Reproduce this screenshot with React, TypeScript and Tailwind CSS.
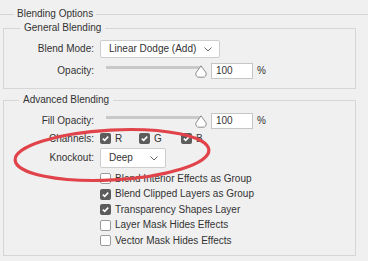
import React from 'react';

const Chevron = () => (
  <svg width="8" height="5" viewBox="0 0 8 5" className="shrink-0">
    <path d="M0.5 0.5 L4 4 L7.5 0.5" fill="none" stroke="#6b6b6b" strokeWidth="1" />
  </svg>
);

const Select = ({ value, width, height }: { value: string; width: string; height: string }) => (
  <div className={`flex items-center justify-between bg-white border border-[#cdcdcd] rounded-[2px] pl-[8px] pr-[7px] ${width} ${height}`}>
    <span>{value}</span>
    <Chevron />
  </div>
);

const Checkbox = ({ checked }: { checked?: boolean }) =>
  checked ? (
    <div className="w-[11px] h-[11px] rounded-[2px] bg-[#5c5c5c] flex items-center justify-center shrink-0">
      <svg width="9" height="9" viewBox="0 0 9 9">
        <path d="M1.8 4.6 L3.7 6.4 L7.2 2.6" fill="none" stroke="#fff" strokeWidth="1.6" />
      </svg>
    </div>
  ) : (
    <div className="w-[11px] h-[11px] rounded-[2px] bg-white border border-[#9a9a9a] shrink-0" />
  );

const Slider = () => (
  <div className="relative w-[107px] h-[16px]">
    <div className="ml-[6px] mt-[3px] w-[94px] h-[3px] bg-[#c9c9c9]" />
    <svg width="12" height="13" viewBox="0 0 12 13" className="absolute left-[95px] top-[2px]">
      <path d="M6 0.8 L11.2 8 Q11.4 12.2 8 12.2 L4 12.2 Q0.6 12.2 0.8 8 Z" fill="#fff" stroke="#8c8c8c" strokeWidth="1" />
    </svg>
  </div>
);

const SliderRow = ({ label }: { label: string }) => (
  <div className="flex items-center h-[16px]">
    <div className="w-[90px] text-right">{label}</div>
    <div className="ml-[6px] flex items-center">
      <Slider />
      <div className="ml-[4px] w-[42px] h-[16px] bg-white border border-[#c6c6c6] pl-[4px] leading-[14px]">100</div>
      <span className="ml-[4px]">%</span>
    </div>
  </div>
);

const CheckRow = ({ label, checked }: { label: string; checked?: boolean }) => (
  <div className="flex items-center h-[15.5px] ml-[96px]">
    <Checkbox checked={checked} />
    <span className="ml-[4px]">{label}</span>
  </div>
);

export default function App() {
  return (
    <div className="relative w-[368px] h-[261px] overflow-hidden bg-[#f0f0f0] text-[10px] leading-[12px] text-[#333333] font-['Liberation_Sans',Arial,sans-serif]">
      <fieldset className="-ml-px mt-[8px] w-[400px] border border-[#d6d6d6] pl-[3px] pb-[20px]">
        <legend className="ml-[11px] px-[3px] leading-[12px]">Blending Options</legend>

        <fieldset className="mt-[2px] w-[353px] border border-[#d6d6d6] pb-[9px]">
          <legend className="ml-[16px] px-[4px] leading-[12px]">General Blending</legend>
          <div className="mt-[6px] flex items-center">
            <div className="w-[90px] text-right">Blend Mode:</div>
            <div className="ml-[6px]">
              <Select value="Linear Dodge (Add)" width="w-[120px]" height="h-[18px]" />
            </div>
          </div>
          <div className="mt-[5px]">
            <SliderRow label="Opacity:" />
          </div>
        </fieldset>

        <fieldset className="mt-[5px] w-[353px] border border-[#d6d6d6] pb-[6px]">
          <legend className="ml-[15px] px-[4px] leading-[12px]">Advanced Blending</legend>
          <div className="mt-[7px]">
            <SliderRow label="Fill Opacity:" />
          </div>
          <div className="mt-[4px] flex items-center h-[11px]">
            <div className="w-[90px] text-right">Channels:</div>
            <div className="ml-[6px] flex items-center">
              <div className="w-[39px] flex items-center">
                <Checkbox checked />
                <span className="ml-[4px]">R</span>
              </div>
              <div className="w-[42px] flex items-center">
                <Checkbox checked />
                <span className="ml-[4px]">G</span>
              </div>
              <div className="flex items-center">
                <Checkbox checked />
                <span className="ml-[4px]">B</span>
              </div>
            </div>
          </div>
          <div className="mt-[4px] flex items-center">
            <div className="w-[90px] text-right">Knockout:</div>
            <div className="ml-[6px]">
              <Select value="Deep" width="w-[66px]" height="h-[20px]" />
            </div>
          </div>
          <div className="mt-[3px]">
            <CheckRow label="Blend Interior Effects as Group" />
            <CheckRow label="Blend Clipped Layers as Group" checked />
            <CheckRow label="Transparency Shapes Layer" checked />
            <CheckRow label="Layer Mask Hides Effects" />
            <CheckRow label="Vector Mask Hides Effects" />
          </div>
        </fieldset>
      </fieldset>

      {/* red annotation ring */}
      <svg className="absolute inset-0 pointer-events-none" width="368" height="261" viewBox="0 0 368 261">
        <ellipse cx="112" cy="155" rx="97" ry="25" transform="rotate(-3 112 155)" fill="none" stroke="#e0444a" strokeWidth="3.2" />
      </svg>
    </div>
  );
}
